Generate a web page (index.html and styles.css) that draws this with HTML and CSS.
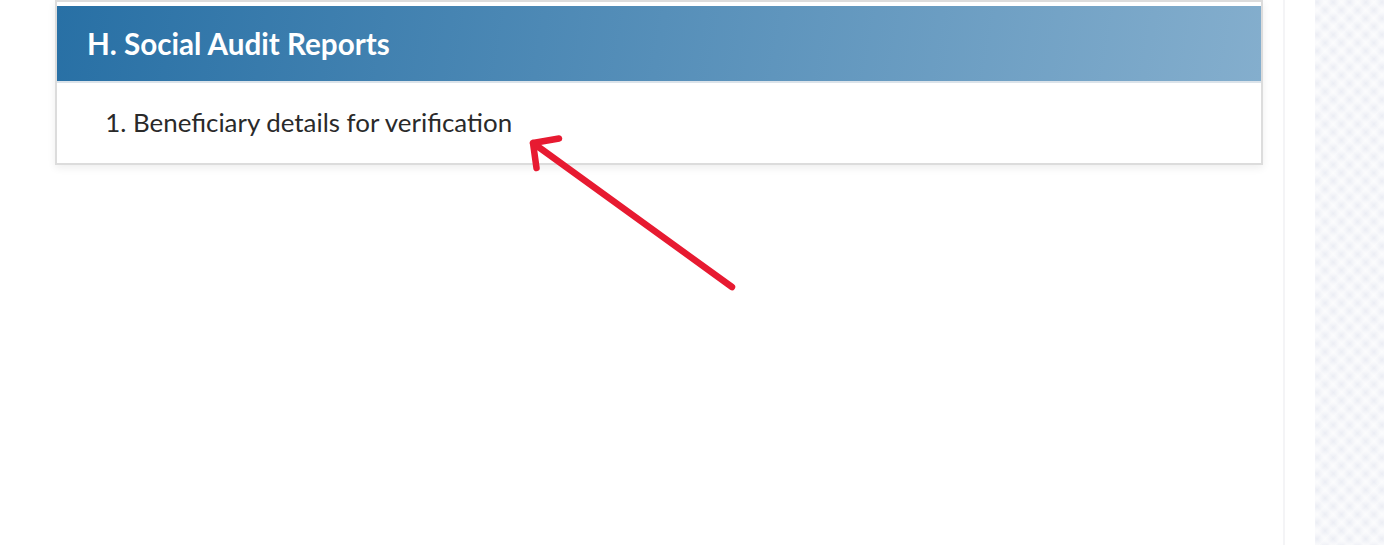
FILE: index.html
```html
<!DOCTYPE html>
<html lang="en">
<head>
    <meta charset="UTF-8">
    <meta name="viewport" content="width=device-width, initial-scale=1.0">
    <title>Social Audit Reports</title>
    <link rel="stylesheet" href="styles.css">
</head>
<body>
    <div class="page">
        <main class="content">
            <section class="report-card">
                <h2 class="report-title">H. Social Audit Reports</h2>
                <ol class="report-list">
                    <li>Beneficiary details for verification</li>
                </ol>
            </section>
        </main>
        <div class="gutter"></div>
        <aside class="side-pattern"></aside>
    </div>

    <svg class="arrow" width="1384" height="545" viewBox="0 0 1384 545" aria-hidden="true">
        <path d="M732 287 L533 143 M559 138.5 L533 143 L536.5 168"></path>
    </svg>
</body>
</html>
```

FILE: styles.css
```css
html, body {
    margin: 0;
    height: 100%;
    background-color: #fff;
    overflow: hidden;
}
body {
    font-family: "Lato", "Liberation Sans", sans-serif;
}
.page {
    display: flex;
    height: 545px;
}
.content {
    width: 1208px;
    padding-left: 55px;
    padding-right: 20px;
    border-right: 2px solid #f4f4f6;
}
.gutter {
    width: 30px;
}
.side-pattern {
    flex: 1;
    background-color: #ebedf4;
    background-image:
        repeating-linear-gradient(45deg, rgba(255, 255, 255, 0.6) 0, rgba(255, 255, 255, 0) 5.75px, rgba(255, 255, 255, 0.6) 11.5px),
        repeating-linear-gradient(-45deg, rgba(255, 255, 255, 0.6) 0, rgba(255, 255, 255, 0) 5.75px, rgba(255, 255, 255, 0.6) 11.5px);
}
.report-card {
    border: 2px solid #dcdcdc;
    padding-top: 4px;
    background-color: #fff;
    box-shadow: 0 3px 8px rgba(0, 0, 0, 0.07);
}
.report-title {
    margin: 0;
    height: 75px;
    line-height: 75px;
    padding-left: 30px;
    font-size: 29.6px;
    font-weight: 700;
    color: #fff;
    background: linear-gradient(100deg, #2870a5, #84aecd);
    border-bottom: 2px solid #dbe3ea;
}
.report-list {
    margin: 0;
    height: 80px;
    padding: 0 0 0 76px;
    font-size: 25.9px;
    line-height: 78px;
    color: #2a2a2a;
}
.arrow {
    position: absolute;
    left: 0;
    top: 0;
    pointer-events: none;
}
.arrow path {
    fill: none;
    stroke: #e71a31;
    stroke-width: 6.5;
    stroke-linecap: round;
    stroke-linejoin: round;
}
```
